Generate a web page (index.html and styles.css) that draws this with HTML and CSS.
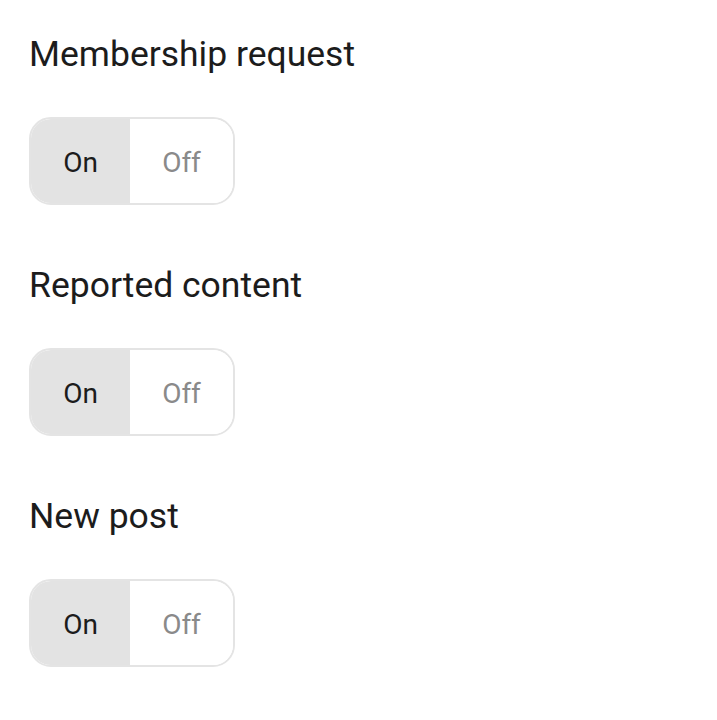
FILE: index.html
```html
<!DOCTYPE html>
<html>
<head>
<meta charset="utf-8">
<link rel="stylesheet" href="styles.css">
</head>
<body>
<div class="page">
  <section class="setting">
    <h2 class="title">Membership request</h2>
    <div class="toggle">
      <span class="opt active">On</span>
      <span class="opt">Off</span>
    </div>
  </section>
  <section class="setting">
    <h2 class="title">Reported content</h2>
    <div class="toggle">
      <span class="opt active">On</span>
      <span class="opt">Off</span>
    </div>
  </section>
  <section class="setting">
    <h2 class="title">New post</h2>
    <div class="toggle">
      <span class="opt active">On</span>
      <span class="opt">Off</span>
    </div>
  </section>
</div>
</body>
</html>
```
FILE: styles.css
```css
html, body {
  margin: 0;
  padding: 0;
  background: #ffffff;
}
body {
  font-family: Roboto, "Noto Sans", sans-serif;
  color: #1f1f1f;
}
.page {
  padding: 30px 0 0 29px;
  display: flex;
  flex-direction: column;
  gap: 56px;
}
.setting {
  display: flex;
  flex-direction: column;
  align-items: flex-start;
  gap: 39px;
}
.title {
  margin: 0;
  font-weight: 400;
  font-size: 35.5px;
  line-height: 48px;
  color: #1c1c1c;
}
.toggle {
  display: flex;
  width: 206px;
  height: 88px;
  box-sizing: border-box;
  border: 2px solid #e4e4e4;
  border-radius: 22px;
  overflow: hidden;
}
.opt {
  flex: 1;
  display: flex;
  align-items: center;
  justify-content: center;
  padding-top: 2px;
  font-size: 28px;
  color: #8a8a8a;
  background: #fff;
}
.opt.active {
  flex: 0 0 99px;
  background: #e3e3e3;
  color: #1c1c1c;
}
```
